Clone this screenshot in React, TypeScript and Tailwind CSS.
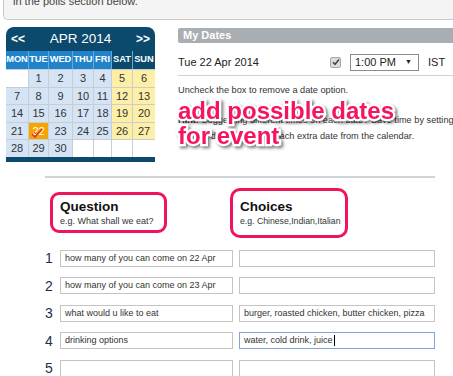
import React from 'react'

const colWidths = 'grid-cols-[22px_19px_23px_20px_17px_20px_22px]'
const dayNames = ['MON', 'TUE', 'WED', 'THU', 'FRI', 'SAT', 'SUN']

// April 2014 starts on a Tuesday
const cells: (number | null)[] = [
    null, 1, 2, 3, 4, 5, 6,
    7, 8, 9, 10, 11, 12, 13,
    14, 15, 16, 17, 18, 19, 20,
    21, 22, 23, 24, 25, 26, 27,
    28, 29, 30, null, null, null, null,
]

const rows = [
    { q: 'how many of you can come on 22 Apr', c: '' },
    { q: 'how many of you can come on 23 Apr', c: '' },
    { q: 'what would u like to eat', c: 'burger, roasted chicken, butter chicken, pizza' },
    { q: 'drinking options', c: 'water, cold drink, juice', focus: true },
    { q: '', c: '' },
]

function Calendar() {
    return (
        <div className="w-[149px] rounded-t-[8px] overflow-hidden bg-[#0b4a6c]">
            <div className="h-[24px] flex items-center justify-between px-[5px] text-white">
                <span className="text-[12px] font-bold leading-none">&lt;&lt;</span>
                <span className="text-[13.5px] leading-none">APR 2014</span>
                <span className="text-[12px] font-bold leading-none">&gt;&gt;</span>
            </div>
            <div className={`grid ${colWidths} h-[18px] gap-x-px bg-[#6aa6d6]`}>
                {dayNames.map((d, i) => (
                    <div
                        key={d}
                        className={`flex items-center justify-center text-white font-bold text-[9.3px] ${i >= 5 ? 'bg-[#0b4a6c]' : 'bg-[#1f84cc]'}`}
                    >
                        {d}
                    </div>
                ))}
            </div>
            <div className={`grid ${colWidths} auto-rows-[16.6px] bg-[#c7cdd3] gap-px pt-px`}>
                {cells.map((n, i) => {
                    const weekend = i % 7 >= 5
                    let bg = 'bg-white'
                    if (n !== null) bg = n === 22 ? 'bg-[#f6a500]' : weekend ? 'bg-[#fdefa6]' : 'bg-[#d5e4f5]'
                    return (
                        <div
                            key={i}
                            className={`relative flex items-center justify-center text-[11px] ${bg} ${n === 22 ? 'text-white' : 'text-[#333]'}`}
                        >
                            {n}
                            {n === 22 && (
                                <svg className="absolute left-[2px] top-[4px]" width="16" height="12" viewBox="0 0 16 12">
                                    <path d="M1 7 L4 10 L11 2" stroke="#e8322a" strokeWidth="1.6" fill="none" />
                                    <path d="M3 5 L6 8" stroke="#e8322a" strokeWidth="1" fill="none" />
                                </svg>
                            )}
                        </div>
                    )
                })}
            </div>
            <div className="h-[5px] bg-[#0b4a6c]" />
        </div>
    )
}

function MyDates() {
    return (
        <div className="relative flex-1 min-w-0">
            <div className="mt-[1px] h-[15px] bg-[#a9aeb3] rounded-l-[2px] pl-[5px] flex items-center text-white font-bold text-[11px]">
                My Dates
            </div>
            <div className="mt-[10px] h-[18px] flex items-center text-[11px] text-[#222]">
                <span className="w-[152px] shrink-0">Tue 22 Apr 2014</span>
                <span className="shrink-0 w-[11px] h-[11px] rounded-[2px] border border-[#a8a8a8] bg-[#dcdcdc] flex items-center justify-center">
                    <svg width="8" height="8" viewBox="0 0 8 8">
                        <path d="M1 4.2 L3 6.3 L7 1.5" stroke="#444" strokeWidth="1.5" fill="none" />
                    </svg>
                </span>
                <div className="shrink-0 ml-[9px] w-[69px] h-[17px] border border-[#8c8c8c] bg-white flex items-center justify-between pl-[4px] pr-[6px]">
                    <span>1:00 PM</span>
                    <span className="text-[7px]">▼</span>
                </div>
                <span className="ml-[9px]">IST</span>
            </div>
            <div className="mt-[4px] h-px bg-[#d2d2d2]" />
            <p className="mt-[9px] text-[9.2px] leading-[11px] text-[#333]">Uncheck the box to remove a date option.</p>
            <p className="mt-[16px] text-[9.2px] leading-[16px] text-[#333] whitespace-nowrap">
                <b>Hint:</b> Suggesting different times on each date? Save time by setting
                <br />
                the first date, then click each extra date from the calendar.
            </p>
            <div className="absolute left-0 top-[71px] text-[24px] leading-[25px] font-bold text-[#f5155e] whitespace-nowrap [-webkit-text-stroke:4.5px_white] [paint-order:stroke_fill] drop-shadow-[2px_2px_1.5px_rgba(0,0,0,0.5)]">
                add possible dates
                <br />
                for event
            </div>
        </div>
    )
}

function Field({ text, focus }: { text: string; focus?: boolean }) {
    return (
        <div
            className={`h-full flex items-center pl-[4px] border bg-white text-[9px] text-[#333] whitespace-nowrap overflow-hidden ${focus ? 'border-[#7ea6dc]' : 'border-[#c4c4c4]'}`}
        >
            {text}
            {focus && <span className="ml-px w-px h-[11px] bg-black" />}
        </div>
    )
}

export default function App() {
    return (
        <div className="w-[453px] h-[376px] overflow-hidden bg-white font-['Liberation_Sans',Arial,sans-serif]">
            <div className="ml-[3px] h-[20px] border-l border-b border-[#c9c9c9] rounded-bl-[5px] bg-[#f4f4f4] pl-[9px] overflow-hidden">
                <p className="-mt-[5px] text-[11px] leading-[12px] text-[#444]">in the polls section below.</p>
            </div>

            <div className="mt-[7px] flex">
                <div className="ml-[6px] shrink-0">
                    <Calendar />
                </div>
                <div className="ml-[23px] flex-1 min-w-0 flex">
                    <MyDates />
                </div>
            </div>

            <div className="ml-[45px] w-[390px] mt-[14px]">
                <div className="h-[2px] bg-[#cfd3d7]" />
                <div className="mt-[10px] flex items-center">
                    <div className="ml-[5px] w-[117px] h-[41px] border-[3px] border-[#f0145a] rounded-[9px] pl-[7px] flex flex-col justify-center">
                        <span className="text-[13.5px] font-bold leading-[15px] text-[#111]">Question</span>
                        <span className="mt-[2px] text-[9px] leading-[11px] text-[#333] whitespace-nowrap">e.g. What shall we eat?</span>
                    </div>
                    <div className="ml-[63px] w-[118px] h-[50px] border-[3px] border-[#f0145a] rounded-[10px] pl-[7px] flex flex-col justify-center">
                        <span className="text-[13.5px] font-bold leading-[15px] text-[#111]">Choices</span>
                        <span className="mt-[2px] text-[8.7px] leading-[11px] text-[#333] whitespace-nowrap">e.g. Chinese,Indian,Italian</span>
                    </div>
                </div>
                <div className="mt-[12px] flex flex-col gap-[10.5px]">
                    {rows.map((r, i) => (
                        <div key={i} className="flex items-center h-[17px]">
                            <span className="w-[15px] text-[14px] leading-none text-[#1f2d4d]">{i + 1}</span>
                            <div className="w-[173px] h-full">
                                <Field text={r.q} />
                            </div>
                            <div className="ml-[6px] w-[196px] h-full">
                                <Field text={r.c} focus={r.focus} />
                            </div>
                        </div>
                    ))}
                </div>
            </div>
        </div>
    )
}
